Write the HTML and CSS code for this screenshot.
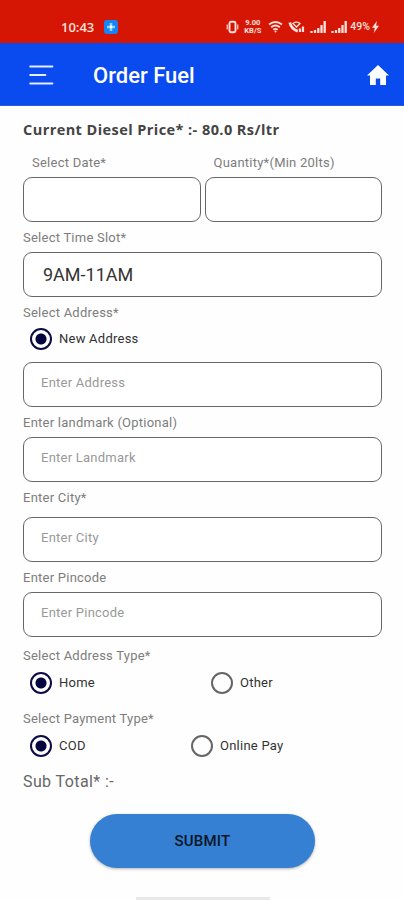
FILE: index.html
```html
<!DOCTYPE html>
<html lang="en">
<head>
    <meta charset="utf-8">
    <meta name="viewport" content="width=device-width, initial-scale=1">
    <title>Order Fuel</title>
    <link rel="stylesheet" href="styles.css">
</head>
<body>
    <!-- Phone status bar -->
    <div class="status-bar">
        <span class="clock">10:43</span>
        <svg class="status-app" width="14" height="14" viewBox="0 0 14 14">
            <rect width="14" height="14" rx="3" fill="#1684f5"/>
            <path d="M7 3v8M3 7h8" stroke="#8fd2fa" stroke-width="2.600"/>
            <circle cx="7" cy="7" r="1.4" fill="#fff"/>
        </svg>
        <div class="status-icons">
            <svg width="13" height="14" viewBox="0 0 13 14" fill="none" stroke="#ffe1dc">
                <rect x="3.500" y="1.700" width="6" height="10.600" rx="1.5" stroke-width="1.9"/>
                <path d="M1.200 4.500v5M11.800 4.500v5" stroke-width="1.1"/>
            </svg>
            <span class="net-speed"><b>9.00</b><b>KB/S</b></span>
            <svg class="wifi" width="15" height="13" viewBox="0 0 15 13" fill="none" stroke="#ffe1dc" stroke-width="1.9">
                <path d="M1 4.500q6.500-5 13 0M3.200 7.200q4.300-3.300 8.600 0M5.300 9.700q2.200-1.600 4.400 0"/>
                <circle cx="7.500" cy="11.500" r="1" fill="#ffe1dc" stroke="none"/>
            </svg>
            <svg class="call" width="17" height="13" viewBox="0 0 17 13" fill="none" stroke="#ffe1dc">
                <path d="M1.800 2.500q1.500 6.500 8 8.700" stroke-width="2.800"/>
                <path d="M5 3.500q3.500-2.600 7 0L8.500 7z" stroke-width="1.300"/>
                <path d="M12 12V8.500M15 12V6.500" stroke-width="2.200"/>
            </svg>
            <svg class="signal" width="16" height="12" viewBox="0 0 16 12" stroke="#ffe1dc" stroke-width="2.300">
                <path d="M1.500 12v-2M5 12V9M8.300 12V7M11.500 12V4M14.700 12V0"/>
            </svg>
            <svg class="signal" width="16" height="12" viewBox="0 0 16 12" stroke="#ffe1dc" stroke-width="2.300">
                <path d="M1.500 12v-2M5 12V9M8.300 12V7M11.500 12V4M14.700 12V0"/>
            </svg>
            <span class="battery">49%</span>
            <svg width="7" height="12" viewBox="0 0 7 12" fill="#ffe1dc">
                <path d="M4.800 0L0 6.800h2.700L1.800 12 7 4.800H4.200z"/>
            </svg>
        </div>
    </div>

    <!-- App header -->
    <header class="app-header">
        <svg width="25" height="20" viewBox="0 0 25 20" stroke="#e4ecff" stroke-width="2.200" stroke-linecap="round">
            <path d="M1.300 1.500h22M1.300 10h15M1.300 18.500h22"/>
        </svg>
        <h1>Order Fuel</h1>
        <svg class="home" width="22" height="20" viewBox="0 0 22 20" fill="#fff">
            <path d="M11 0L0 10.500h3V20h5.800v-6.600h4.400V20H19v-9.500h3z"/>
        </svg>
    </header>

    <!-- Order form -->
    <form class="order-form">
        <h2>Current Diesel Price* :- 80.0 Rs/ltr</h2>
        <div class="columns">
            <div class="field">
                <label for="date" class="indent">Select Date*</label>
                <input type="text" id="date">
            </div>
            <div class="field">
                <label for="quantity" class="indent">Quantity*(Min 20lts)</label>
                <input type="text" id="quantity">
            </div>
        </div>
        <div class="field">
            <label for="slot">Select Time Slot*</label>
            <input type="text" id="slot" class="slot" value="9AM-11AM">
        </div>
        <div class="field address">
            <label for="address">Select Address*</label>
            <div class="options">
                <label class="option"><input type="radio" name="saved" checked>New Address</label>
            </div>
            <input type="text" id="address" placeholder="Enter Address">
        </div>
        <div class="field">
            <label for="landmark">Enter landmark (Optional)</label>
            <input type="text" id="landmark" placeholder="Enter Landmark">
        </div>
        <div class="field city">
            <label for="city">Enter City*</label>
            <input type="text" id="city" placeholder="Enter City">
        </div>
        <div class="field">
            <label for="pincode">Enter Pincode</label>
            <input type="text" id="pincode" placeholder="Enter Pincode">
        </div>
        <div class="field type">
            <label>Select Address Type*</label>
            <div class="options address-type">
                <label class="option"><input type="radio" name="type" checked>Home</label>
                <label class="option"><input type="radio" name="type">Other</label>
            </div>
        </div>
        <div class="field payment">
            <label>Select Payment Type*</label>
            <div class="options payment-type">
                <label class="option"><input type="radio" name="payment" checked>COD</label>
                <label class="option"><input type="radio" name="payment">Online Pay</label>
            </div>
        </div>
        <p class="total">Sub Total* :-</p>
        <button type="button">SUBMIT</button>
    </form>
    <div class="gesture-bar"></div>
</body>
</html>
```
FILE: styles.css
```css
* {
    box-sizing: border-box;
}

body {
    display: flex;
    flex-direction: column;
    height: 900px;
    margin: 0;
    overflow: hidden;
    background-color: #fefefe;
    font-family: Roboto, sans-serif;
}

/* Status bar */
.status-bar {
    display: flex;
    align-items: center;
    height: 43px;
    padding: 10px 25px 0 61px;
    background-color: #d51604;
    color: #ffe1dc;
}

.clock {
    width: 43px;
    font-family: "Open Sans", sans-serif;
    font-size: 13px;
    font-weight: 600;
}

.status-icons {
    display: flex;
    align-items: center;
    margin-left: auto;
}

.net-speed {
    width: 19px;
    margin-left: 4px;
    font-size: 7.5px;
    line-height: 8px;
    text-align: center;
}

.net-speed b {
    display: block;
}

.wifi {
    margin-left: 6px;
}

.call {
    margin-left: 5px;
}

.signal {
    margin-left: 5px;
}

.battery {
    margin: 0 2px 0 3px;
    font-size: 10.5px;
    font-weight: 500;
}

/* Header */
.app-header {
    display: flex;
    align-items: center;
    height: 63px;
    padding: 1px 15px 0 29px;
    background-color: #0a4bef;
    border-bottom: 1px solid #2b5fd9;
}

.app-header h1 {
    margin: 2px 0 0 39px;
    color: #fff;
    font-size: 22px;
    font-weight: 500;
}

.home {
    margin-left: auto;
}

/* Form */
.order-form {
    display: flex;
    flex-direction: column;
    padding: 0 22px 0 23px;
}

.order-form h2 {
    margin: 15px 0 15px;
    color: #444;
    font-family: "Open Sans", sans-serif;
    font-size: 14.5px;
    font-weight: 700;
    line-height: 18px;
    letter-spacing: 0.43px;
    white-space: nowrap;
}

.columns {
    display: grid;
    grid-template-columns: 1fr 1fr;
    gap: 4px;
}

.field {
    display: flex;
    flex-direction: column;
    gap: 5px;
    margin-bottom: 7px;
    color: #7d7d7d;
    font-size: 13px;
    line-height: 18px;
    letter-spacing: 0.24px;
}

.indent {
    padding-left: 9px;
}

.field input[type="text"] {
    width: 100%;
    height: 45px;
    padding: 0 17px 4px;
    border: 1px solid #666;
    border-radius: 9px;
    outline: none;
    background-color: #fff;
    color: #333;
    font-family: inherit;
    font-size: 13px;
    letter-spacing: 0.24px;
}

.field input::placeholder {
    color: #999;
}

.field input.slot {
    padding: 0 19px;
    font-size: 18px;
    letter-spacing: 0;
}

.address .options {
    margin: 1px 0 7px;
}

.city {
    gap: 10px;
}

.field.type {
    margin: 3px 0 16px;
    gap: 7px;
}

.field.payment {
    margin-bottom: 16px;
    gap: 7px;
}

/* Radio buttons */
.options {
    display: grid;
    padding-left: 7px;
}

.address-type {
    grid-template-columns: 181px 1fr;
}

.payment-type {
    grid-template-columns: 161px 1fr;
}

.option {
    display: flex;
    align-items: center;
    gap: 7px;
    height: 22px;
    color: #333;
}

.option input {
    appearance: none;
    width: 22px;
    height: 22px;
    margin: 0;
    border: 2px solid #666;
    border-radius: 50%;
}

.option input:checked {
    border-color: #0b0b45;
    background: radial-gradient(circle, #03033f 5px, transparent 6px);
}

.total {
    margin: 0;
    color: #666;
    font-size: 16px;
    line-height: 18px;
    letter-spacing: 0.4px;
}

button {
    align-self: center;
    width: 225px;
    height: 54px;
    margin-top: 23px;
    border: none;
    border-radius: 27px;
    background-color: #3580d3;
    box-shadow: 0 1px 3px rgba(0, 0, 0, 0.3);
    color: #0b1626;
    font-family: inherit;
    font-size: 15px;
    font-weight: 500;
    letter-spacing: 0.2px;
}

.gesture-bar {
    width: 134px;
    height: 3px;
    margin: auto 134px 0 136px;
    background-color: #e8e8e8;
}
```
